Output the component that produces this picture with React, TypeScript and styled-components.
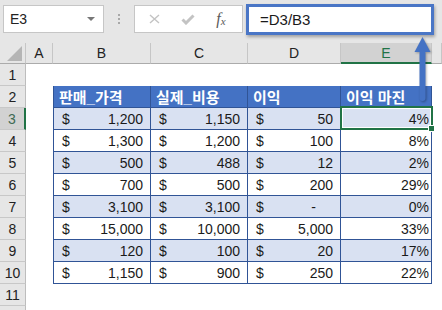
import styled, { createGlobalStyle } from 'styled-components';

type DataRow = { price: string; cost: string; profit: string; margin: string };

const data: DataRow[] = [
  { price: '1,200', cost: '1,150', profit: '50', margin: '4%' },
  { price: '1,300', cost: '1,200', profit: '100', margin: '8%' },
  { price: '500', cost: '488', profit: '12', margin: '2%' },
  { price: '700', cost: '500', profit: '200', margin: '29%' },
  { price: '3,100', cost: '3,100', profit: '-', margin: '0%' },
  { price: '15,000', cost: '10,000', profit: '5,000', margin: '33%' },
  { price: '120', cost: '100', profit: '20', margin: '17%' },
  { price: '1,150', cost: '900', profit: '250', margin: '22%' },
];

const headers = ['판매_가격', '실제_비용', '이익', '이익 마진'];
const columns = ['A', 'B', 'C', 'D', 'E', ''];

const Money = ({ value }: { value: string }) => (
  <>
    <span>$</span>
    <Amount $dash={value === '-'}>{value}</Amount>
  </>
);

const App = () => {
  return (
    <Page>
      <GlobalStyle />
      <Toolbar>
        <NameBox>
          E3
          <Caret />
        </NameBox>
        <Grip>
          <Dot />
          <Dot />
          <Dot />
        </Grip>
        <FxBox>
          <svg width="11" height="10" viewBox="0 0 11 10">
            <path d="M1 1 L10 9 M10 1 L1 9" stroke="#c3c3c3" strokeWidth="1.4" fill="none" />
          </svg>
          <svg width="14" height="11" viewBox="0 0 14 11">
            <path d="M1.5 5.5 L5 9 L12.5 1.5" stroke="#c3c3c3" strokeWidth="3" fill="none" />
          </svg>
          <Fx>
            f<sub>x</sub>
          </Fx>
        </FxBox>
        <FormulaBox>=D3/B3</FormulaBox>
      </Toolbar>

      <Sheet>
        <Corner>
          <svg width="15" height="15" viewBox="0 0 15 15">
            <polygon points="15,0 15,15 0,15" fill="#b5b5b5" />
          </svg>
        </Corner>
        {columns.map((c, i) => (
          <ColHeader key={i} $active={c === 'E'}>
            {c}
          </ColHeader>
        ))}

        <RowNum>1</RowNum>
        <Blank />

        <RowNum>2</RowNum>
        <Gap />
        {headers.map((h, i) => (
          <TableCell key={h} $head $first={i === 0}>
            {h}
          </TableCell>
        ))}
        <Gap />

        {data.map((r, i) => (
          <Row key={i} r={r} n={i + 3} band={i % 2 === 0} />
        ))}

        <RowNum>11</RowNum>
        <Blank />
        <RowNum />
        <Blank />
      </Sheet>

      <Arrow width="20" height="70" viewBox="0 0 20 70">
        <polygon points="10.5,3 2.5,18 18.5,18" fill="#4472c4" />
        <rect x="7.5" y="16" width="6" height="51" rx="3" fill="#4472c4" />
      </Arrow>
    </Page>
  );
};

const Row = ({ r, n, band }: { r: DataRow; n: number; band: boolean }) => (
  <>
    <RowNum $active={n === 3}>{n}</RowNum>
    <Gap />
    <TableCell $band={band} $first>
      <Money value={r.price} />
    </TableCell>
    <TableCell $band={band}>
      <Money value={r.cost} />
    </TableCell>
    <TableCell $band={band}>
      <Money value={r.profit} />
    </TableCell>
    <TableCell $band={band} $pct $selected={n === 3}>
      {r.margin}
    </TableCell>
    <Gap />
  </>
);

export default App;

const GlobalStyle = createGlobalStyle`
  html, body {
    margin: 0;
    padding: 0;
    background: #fff;
  }
  body {
    font-family: 'Liberation Sans', Arial, 'Noto Sans CJK KR', sans-serif;
    color: #1a1a1a;
  }
`;

const Page = styled.div`
  position: relative;
  width: 442px;
  height: 310px;
  overflow: hidden;
  background: #fff;
`;

const Toolbar = styled.div`
  display: flex;
  align-items: flex-start;
  height: 43px;
  padding-top: 5px;
  box-sizing: border-box;
  background: #e6e6e6;
`;

const NameBox = styled.div`
  position: relative;
  display: flex;
  align-items: center;
  box-sizing: border-box;
  width: 101px;
  height: 28px;
  margin-left: 3px;
  padding-left: 6px;
  background: #fff;
  border: 1px solid #c6c6c6;
  font-size: 14px;
  color: #222;
`;

const Caret = styled.span`
  position: absolute;
  right: 8px;
  top: 11px;
  width: 0;
  height: 0;
  border-left: 4px solid transparent;
  border-right: 4px solid transparent;
  border-top: 4px solid #777;
`;

const Grip = styled.div`
  display: flex;
  flex-direction: column;
  align-items: center;
  gap: 2px;
  width: 30px;
  padding-top: 9px;
`;

const Dot = styled.span`
  width: 2px;
  height: 2px;
  background: #a8a8a8;
`;

const FxBox = styled.div`
  display: flex;
  align-items: center;
  justify-content: space-around;
  box-sizing: border-box;
  width: 109px;
  height: 28px;
  padding: 0 6px 0 4px;
  background: #fff;
  border: 1px solid #c6c6c6;
`;

const Fx = styled.span`
  font-family: 'Liberation Serif', 'Times New Roman', serif;
  font-style: italic;
  font-size: 16px;
  color: #5a5a5a;
  line-height: 1;

  sub {
    font-size: 11px;
    vertical-align: -1px;
  }
`;

const FormulaBox = styled.div`
  display: flex;
  align-items: center;
  box-sizing: border-box;
  width: 188px;
  height: 31px;
  margin: -1px 0 0 3px;
  padding-left: 11px;
  background: #fff;
  border: 3px solid #4a76c6;
  box-shadow: 1px 2px 3px rgba(0, 0, 0, 0.3);
  font-size: 15px;
  color: #1a1a1a;
`;

const Sheet = styled.div`
  display: grid;
  grid-template-columns: 26px 27px 98px 97px 93px 91px 1fr;
  grid-template-rows: 21px repeat(12, 22px);
  font-size: 14px;
`;

const Corner = styled.div`
  display: flex;
  align-items: flex-end;
  justify-content: flex-end;
  padding: 0 3px 2px 0;
  background: #e6e6e6;
  border-right: 1px solid #c6c6c6;
  border-bottom: 1px solid #ababab;
`;

const ColHeader = styled.div<{ $active?: boolean }>`
  display: flex;
  align-items: center;
  justify-content: center;
  box-sizing: border-box;
  background: ${(p) => (p.$active ? '#d2d2d2' : '#e6e6e6')};
  color: ${(p) => (p.$active ? '#217346' : '#222')};
  border-right: 1px solid #c6c6c6;
  border-bottom: ${(p) => (p.$active ? '2px solid #217346' : '1px solid #ababab')};
  font-size: 14px;
`;

const RowNum = styled.div<{ $active?: boolean }>`
  display: flex;
  align-items: center;
  justify-content: center;
  box-sizing: border-box;
  background: ${(p) => (p.$active ? '#d2d2d2' : '#e6e6e6')};
  color: ${(p) => (p.$active ? '#3f6b52' : '#222')};
  border-right: ${(p) => (p.$active ? '2px solid #217346' : '1px solid #bdbdbd')};
  border-bottom: 1px solid #c8c8c8;
  font-size: 14px;
`;

const Blank = styled.div`
  grid-column: span 6;
`;

const Gap = styled.div``;

const TableCell = styled.div<{
  $head?: boolean;
  $band?: boolean;
  $first?: boolean;
  $pct?: boolean;
  $selected?: boolean;
}>`
  position: relative;
  display: flex;
  align-items: center;
  justify-content: ${(p) => (p.$head ? 'flex-start' : p.$pct ? 'flex-end' : 'space-between')};
  box-sizing: border-box;
  padding: ${(p) => (p.$head ? '0 0 0 5px' : p.$pct ? '0 2px 0 0' : '0 7px 0 8px')};
  background: ${(p) => (p.$head ? '#4472c4' : p.$band ? '#d9e1f2' : '#fff')};
  color: ${(p) => (p.$head ? '#fff' : '#1a1a1a')};
  font-size: ${(p) => (p.$head ? '15px' : '14px')};
  font-weight: ${(p) => (p.$head ? 700 : 400)};
  border-left: ${(p) => (p.$first ? '1px solid #305496' : 'none')};
  border-right: 1px solid #305496;
  border-bottom: 1px solid #305496;
  white-space: nowrap;

  ${(p) =>
    p.$selected &&
    `
    &::after {
      content: '';
      position: absolute;
      inset: -2px -2px -1px -1px;
      border: 2px solid #217346;
      box-shadow: inset 0 0 0 1px #fff;
    }
    &::before {
      content: '';
      position: absolute;
      right: -4px;
      bottom: -3px;
      width: 5px;
      height: 5px;
      background: #217346;
      border: 1px solid #fff;
      z-index: 1;
    }
  `}
`;

const Amount = styled.span<{ $dash?: boolean }>`
  margin-right: ${(p) => (p.$dash ? '17px' : '0')};
`;

const Arrow = styled.svg`
  position: absolute;
  left: 412px;
  top: 34px;
  filter: drop-shadow(1px 1px 1px rgba(0, 0, 0, 0.3));
`;
